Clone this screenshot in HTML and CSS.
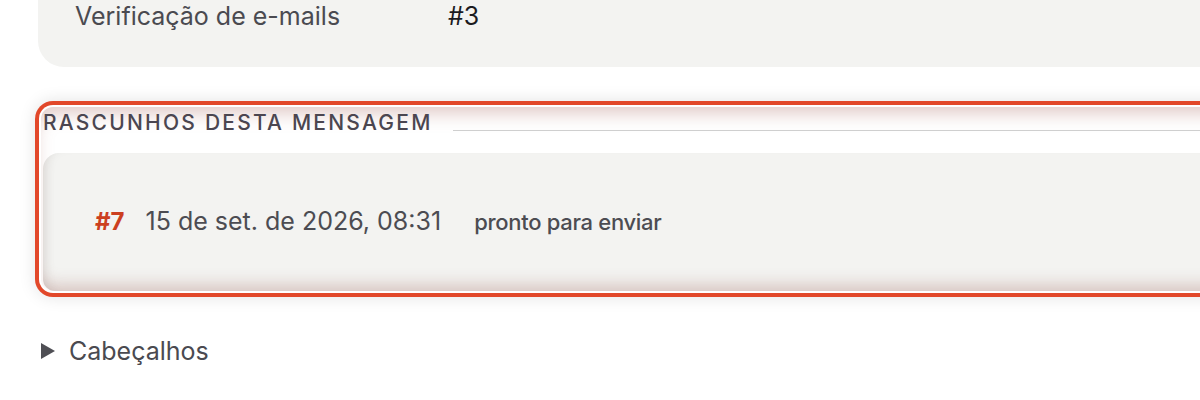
FILE: index.html
```html
<!DOCTYPE html>
<html lang="pt">
<head>
<meta charset="utf-8">
<link rel="stylesheet" href="styles.css">
</head>
<body>
<div class="page">
  <div class="info-card">
    <div class="info-row">
      <span class="info-label">Verificação de e-mails</span>
      <span class="info-value">#3</span>
    </div>
  </div>

  <section class="drafts">
    <h2 class="drafts-title">RASCUNHOS DESTA MENSAGEM</h2>
    <div class="draft-card">
      <div class="draft-row">
        <span class="draft-id">#7</span>
        <span class="draft-date">15 de set. de 2026, 08:31</span>
        <span class="draft-status">pronto para enviar</span>
      </div>
    </div>
  </section>

  <div class="headers">
    <span class="caret"></span>
    <span class="headers-label">Cabeçalhos</span>
  </div>
</div>
</body>
</html>
```
FILE: styles.css
```css
html, body {
  margin: 0;
  padding: 0;
  background: #ffffff;
  overflow: hidden;
}
body {
  font-family: Inter, "Noto Sans", "Liberation Sans", sans-serif;
  color: #4a4a50;
}
.page {
  width: 1400px;
  padding-left: 38px;
  box-sizing: border-box;
}
.info-card {
  background: #f3f3f1;
  border-radius: 0 0 0 26px;
  padding: 0 0 35px 37px;
}
.info-row {
  display: grid;
  grid-template-columns: 373px 1fr;
  font-size: 25px;
  line-height: 32px;
}
.info-label { color: #4a4a50; }
.info-value { color: #1b1b1f; }

.drafts {
  margin: 40px 0 0 3px;
  height: 184px;
  border-radius: 12px;
  padding: 3px 0 0 2px;
  box-sizing: border-box;
  display: flex;
  flex-direction: column;
  background: #ffffff;
  box-shadow:
    0 0 0 2px #ffffff,
    0 0 0 6px #e2482a,
    0 0 16px 7px rgba(0, 0, 0, 0.10),
    inset 0 12px 18px -6px rgba(165, 95, 85, 0.34);
}
.drafts-title {
  margin: 0;
  display: flex;
  align-items: flex-end;
  font-size: 21px;
  line-height: 26px;
  font-weight: 500;
  letter-spacing: 2.22px;
  color: #4b4650;
}
.drafts-title::after {
  content: "";
  flex: 1;
  height: 1px;
  background: #cfcfcf;
  margin: 0 0 5px 20px;
}
.draft-card {
  margin-top: 17px;
  flex: 1;
  background: #f3f3f1;
  border-radius: 16px 0 0 12px;
  display: flex;
  align-items: center;
  padding-left: 52px;
  box-shadow:
    inset 0 -12px 16px -6px rgba(160, 100, 90, 0.32),
    inset 10px 0 12px -8px rgba(0, 0, 0, 0.08);
}
.draft-row {
  display: flex;
  align-items: baseline;
  padding-bottom: 2px;
}
.draft-id {
  color: #cc3f1f;
  font-weight: 700;
  font-size: 24px;
  margin-right: 21px;
}
.draft-date {
  font-size: 25px;
  color: #4c4c52;
  margin-right: 33px;
}
.draft-status {
  font-size: 22px;
  font-weight: 500;
  color: #4c4c52;
  letter-spacing: -0.3px;
}

.headers {
  margin-top: 44px;
  padding-left: 3px;
  display: flex;
  align-items: center;
  font-size: 25px;
  line-height: 32px;
}
.caret {
  width: 0;
  height: 0;
  border-left: 14px solid #4f4f55;
  border-top: 8px solid transparent;
  border-bottom: 8px solid transparent;
  margin-right: 14px;
}
.headers-label { color: #4a4a50; }
```
